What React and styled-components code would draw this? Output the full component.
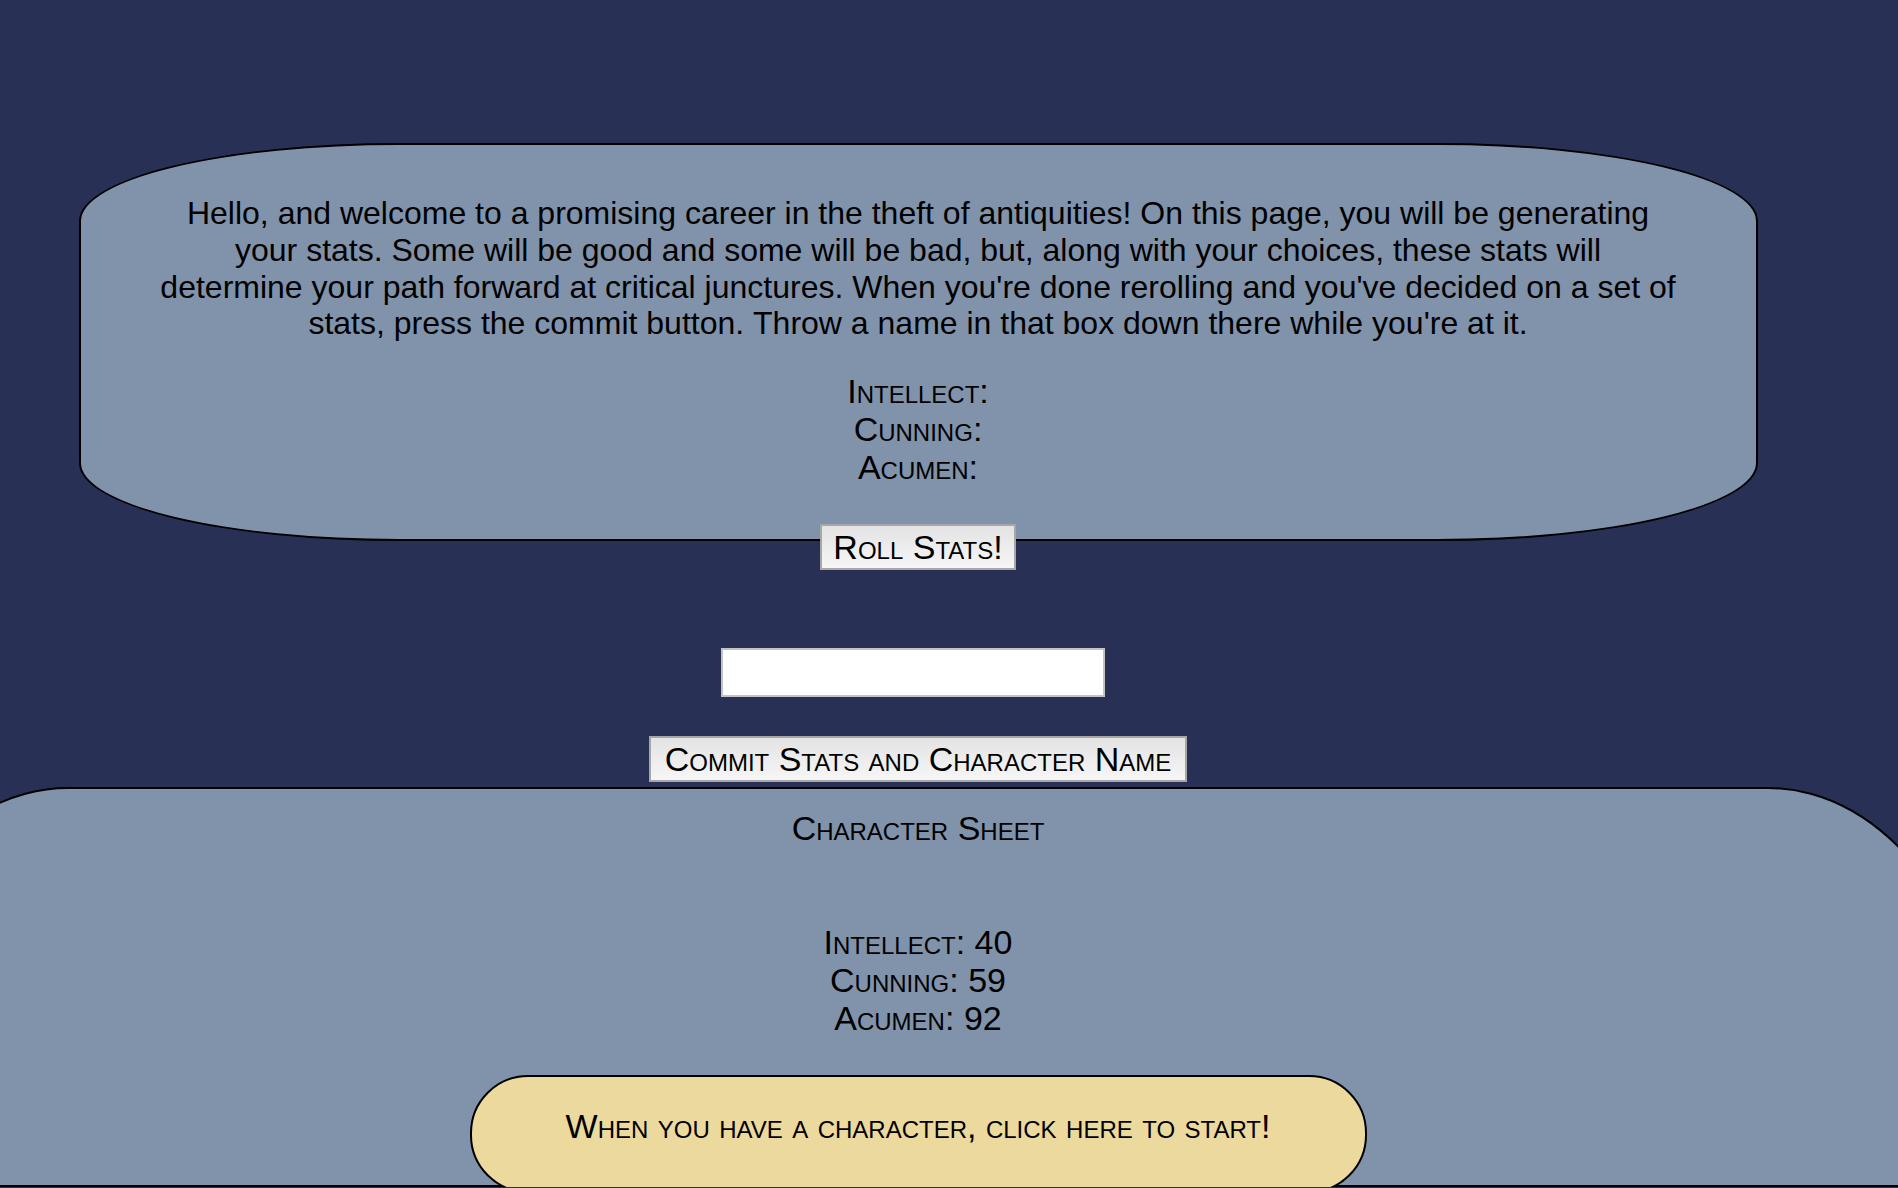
import React from "react";
import styled, { createGlobalStyle, css } from "styled-components";

const GlobalStyle = createGlobalStyle`
  html, body {
    margin: 0;
    padding: 0;
    overflow: hidden;
    background: #283056;
  }
  body {
    font-family: "Liberation Sans", Arial, Helvetica, sans-serif;
    color: #000;
  }
`;

const smallCaps = css`
  font-family: "Liberation Sans", Arial, sans-serif;
  font-variant: small-caps;
  font-size: 34px;
  line-height: 38px;
  color: #000;
`;

const Page = styled.main`
  width: 1836px;
  padding-top: 143px;
  display: flex;
  flex-direction: column;
  align-items: center;
  & > * {
    flex-shrink: 0;
  }
`;

const Panel = styled.section`
  box-sizing: border-box;
  width: ${(p) => p.$width}px;
  height: ${(p) => p.$height}px;
  margin-top: ${(p) => p.$top || 0}px;
  padding-top: ${(p) => p.$padTop}px;
  background: #8093ab;
  border: 2px solid #000;
  border-radius: ${(p) => p.$radius};
  display: flex;
  flex-direction: column;
  align-items: center;
  & > * {
    flex-shrink: 0;
  }
`;

const Intro = styled.p`
  margin: 0;
  width: 1516px;
  font-size: 32px;
  line-height: 36.8px;
  text-align: center;
  font-kerning: none;
`;

const Heading = styled.h2`
  margin: 0;
  font-weight: normal;
  ${smallCaps}
`;

const StatList = styled.div`
  margin-top: ${(p) => p.$top}px;
  text-align: center;
  ${smallCaps}
`;

const StatLine = styled.div``;

const PlainButton = styled.button`
  box-sizing: border-box;
  margin-top: ${(p) => p.$top}px;
  padding: 2px ${(p) => p.$padX}px;
  border: 2px solid #a7a7a7;
  border-radius: 0;
  background: linear-gradient(#e3e3e3, #f6f6f6);
  cursor: pointer;
  ${smallCaps}
`;

const NameInput = styled.input`
  box-sizing: border-box;
  margin-top: 107px;
  margin-right: 10px;
  width: 384px;
  height: 49px;
  border: 2px solid #c4c4c4;
  background: #fff;
  font-size: 24px;
  font-family: "Liberation Sans", Arial, sans-serif;
  padding: 0 8px;
  outline: none;
`;

const StartButton = styled.button`
  box-sizing: border-box;
  margin-top: 38px;
  width: 897px;
  padding: 30px 0 46px;
  background: #ecd99e;
  border: 2px solid #000;
  border-radius: 58px;
  cursor: pointer;
  ${smallCaps}
`;

const stats = [
  { name: "Intellect", value: 40 },
  { name: "Cunning", value: 59 },
  { name: "Acumen", value: 92 },
];

export default function App() {
  return (
    <>
      <GlobalStyle />
      <Page>
        <Panel $width={1679} $height={398} $padTop={50} $radius="320px / 78px">
          <Intro>
            Hello, and welcome to a promising career in the theft of antiquities! On this page, you will be
            generating your stats. Some will be good and some will be bad, but, along with your choices, these
            stats will determine your path forward at critical junctures. When you're done rerolling and you've
            decided on a set of stats, press the commit button. Throw a name in that box down there while you're
            at it.
          </Intro>
          <StatList $top={30}>
            {stats.map((s) => (
              <StatLine key={s.name}>{s.name}:</StatLine>
            ))}
          </StatList>
          <PlainButton $top={38} $padX={11}>Roll Stats!</PlainButton>
        </Panel>

        <NameInput type="text" aria-label="Character name" />

        <PlainButton $top={39} $padX={14}>Commit Stats and Character Name</PlainButton>

        <Panel
          $width={2140}
          $height={400}
          $top={5}
          $padTop={20}
          $radius="220px 220px 0 0 / 300px 300px 0 0"
        >
          <Heading>Character Sheet</Heading>
          <StatList $top={76}>
            {stats.map((s) => (
              <StatLine key={s.name}>
                {s.name}: {s.value}
              </StatLine>
            ))}
          </StatList>
          <StartButton>When you have a character, click here to start!</StartButton>
        </Panel>
      </Page>
    </>
  );
}
